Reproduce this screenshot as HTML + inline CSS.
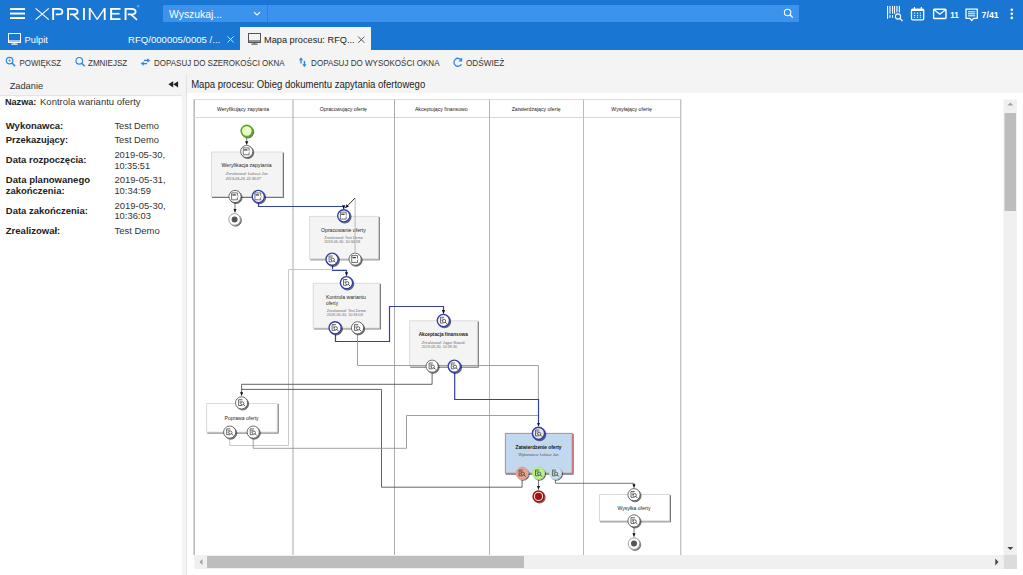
<!DOCTYPE html>
<html><head><meta charset="utf-8"><style>
*{margin:0;padding:0}
html,body{width:1023px;height:575px;overflow:hidden;background:#fff}
svg{display:block;font-family:"Liberation Sans", sans-serif}
</style></head><body>
<svg width="1023" height="575" viewBox="0 0 1023 575">
<rect x="0" y="0" width="1023" height="50" fill="#1976d2" stroke="none" stroke-width="1"/>
<rect x="163" y="5" width="104" height="17" fill="#3b93ee" stroke="none" stroke-width="1"/>
<rect x="267" y="5" width="1" height="17" fill="#2f80d8" stroke="none" stroke-width="1"/>
<rect x="268" y="5" width="531" height="17" fill="#3b93ee" stroke="none" stroke-width="1"/>
<text x="169" y="17.5" font-size="10" fill="#fff" font-weight="normal" font-style="normal" text-anchor="start" textLength="53" lengthAdjust="spacingAndGlyphs">Wyszukaj...</text>
<polyline points="254,12.2 257,15 260,12.2" fill="none" stroke="#fff" stroke-width="1.1"/>
<circle cx="787.6" cy="12.4" r="3.2" fill="none" stroke="#fff" stroke-width="1.1"/>
<polyline points="789.9,14.7 792.8,17.6" fill="none" stroke="#fff" stroke-width="1.3"/>
<rect x="10" y="8.1" width="15" height="1.9" fill="#fff" stroke="none" stroke-width="1"/>
<rect x="10" y="12.6" width="15" height="1.9" fill="#fff" stroke="none" stroke-width="1"/>
<rect x="10" y="17.1" width="15" height="1.9" fill="#fff" stroke="none" stroke-width="1"/>
<path d="M35.6,8.4 L48.8,19.6 M48.8,8.4 L35.6,19.6" stroke="#fff" stroke-width="1.15" fill="none"/>
<rect x="52.2" y="8" width="1.9" height="12" fill="#fff"/>
<path d="M53,8.95 L58.4,8.95 Q62.4,8.95 62.4,11.65 Q62.4,14.3 58.4,14.3 L55.8,14.3" stroke="#fff" stroke-width="1.8" fill="none"/>
<rect x="67.1" y="8" width="1.9" height="12" fill="#fff"/>
<path d="M68,8.95 L73.5,8.95 Q77.6,8.95 77.6,11.65 Q77.6,14.3 73.5,14.3 L70,14.3" stroke="#fff" stroke-width="1.8" fill="none"/>
<path d="M73.2,14.3 L78.8,19.9" stroke="#fff" stroke-width="1.6" fill="none"/>
<rect x="83" y="8" width="1.9" height="12" fill="#fff"/>
<rect x="88.8" y="8" width="1.8" height="12" fill="#fff"/>
<rect x="103.8" y="8" width="1.8" height="12" fill="#fff"/>
<path d="M89.8,8.4 L97.2,19.3 L104.6,8.4" stroke="#fff" stroke-width="1.35" fill="none" stroke-linejoin="bevel"/>
<rect x="110.2" y="8" width="1.9" height="12" fill="#fff"/>
<rect x="110.2" y="8" width="10.3" height="1.8" fill="#fff"/>
<rect x="110.2" y="12.9" width="9.4" height="1.6" fill="#fff"/>
<rect x="110.2" y="18.2" width="10.3" height="1.8" fill="#fff"/>
<rect x="124.6" y="8" width="1.9" height="12" fill="#fff"/>
<path d="M125.5,8.95 L131.3,8.95 Q135.6,8.95 135.6,11.65 Q135.6,14.3 131.3,14.3 L127.8,14.3" stroke="#fff" stroke-width="1.8" fill="none"/>
<path d="M131,14.3 L137,19.9" stroke="#fff" stroke-width="1.6" fill="none"/>
<circle cx="138.2" cy="6.2" r="0.9" fill="none" stroke="#cfe0f5" stroke-width="0.45"/>
<rect x="887" y="5.9" width="1.1" height="13" fill="#fff" stroke="none" stroke-width="1"/>
<rect x="889.1" y="5.9" width="1.8" height="7.8" fill="#a9cbf0" stroke="none" stroke-width="1"/>
<rect x="889.1" y="15.1" width="1.8" height="2.7" fill="#a9cbf0" stroke="none" stroke-width="1"/>
<rect x="892" y="5.9" width="1.1" height="7.8" fill="#fff" stroke="none" stroke-width="1"/>
<rect x="892" y="15.1" width="1.1" height="2.7" fill="#fff" stroke="none" stroke-width="1"/>
<rect x="894" y="5.9" width="1.1" height="7.8" fill="#fff" stroke="none" stroke-width="1"/>
<rect x="896" y="5.9" width="1.8" height="6.5" fill="#a9cbf0" stroke="none" stroke-width="1"/>
<rect x="898.8" y="5.9" width="1.1" height="6.5" fill="#fff" stroke="none" stroke-width="1"/>
<circle cx="898" cy="16.5" r="2.6" fill="#1976d2" stroke="#fff" stroke-width="1.1"/>
<polyline points="899.9,18.4 902.5,21" fill="none" stroke="#fff" stroke-width="1.3"/>
<rect x="911.5" y="9.3" width="12.2" height="10.5" fill="none" stroke="#fff" stroke-width="1.3" rx="1"/>
<rect x="911.2" y="8.7" width="12.8" height="2.2" fill="#fff" stroke="none" stroke-width="1" rx="0.8"/>
<rect x="913.9" y="7" width="1.2" height="2.5" fill="#fff" stroke="none" stroke-width="1"/>
<rect x="920.7" y="7" width="1.2" height="2.5" fill="#fff" stroke="none" stroke-width="1"/>
<rect x="913.9" y="12.6" width="1.3" height="1.2" fill="#dbe9f8" stroke="none" stroke-width="1"/>
<rect x="913.9" y="14.8" width="1.3" height="1.2" fill="#dbe9f8" stroke="none" stroke-width="1"/>
<rect x="913.9" y="16.7" width="1.3" height="1.2" fill="#dbe9f8" stroke="none" stroke-width="1"/>
<rect x="916.9" y="12.6" width="1.3" height="1.2" fill="#dbe9f8" stroke="none" stroke-width="1"/>
<rect x="916.9" y="14.8" width="1.3" height="1.2" fill="#dbe9f8" stroke="none" stroke-width="1"/>
<rect x="916.9" y="16.7" width="1.3" height="1.2" fill="#dbe9f8" stroke="none" stroke-width="1"/>
<rect x="919.8" y="12.6" width="1.3" height="1.2" fill="#dbe9f8" stroke="none" stroke-width="1"/>
<rect x="919.8" y="14.8" width="1.3" height="1.2" fill="#dbe9f8" stroke="none" stroke-width="1"/>
<rect x="919.8" y="16.7" width="1.3" height="1.2" fill="#dbe9f8" stroke="none" stroke-width="1"/>
<rect x="933.6" y="9.2" width="12.4" height="9.3" fill="none" stroke="#fff" stroke-width="1.4" rx="0.8"/>
<polyline points="933.8,9.6 939.8,14.2 945.8,9.6" fill="none" stroke="#fff" stroke-width="1.3"/>
<text x="950.2" y="18" font-size="9" fill="#fff" font-weight="bold" font-style="normal" text-anchor="start" textLength="8.6" lengthAdjust="spacingAndGlyphs">11</text>
<path d="M966,9.1 L977.3,9.1 L977.3,18.3 L973.5,18.3 L971.7,20.6 L969.9,18.3 L966,18.3 Z" fill="none" stroke="#fff" stroke-width="1.3" stroke-linejoin="round"/>
<rect x="968" y="11.3" width="7.3" height="1" fill="#fff" stroke="none" stroke-width="1"/>
<rect x="968" y="13.3" width="7.3" height="1" fill="#fff" stroke="none" stroke-width="1"/>
<rect x="968" y="15.3" width="7.3" height="1" fill="#fff" stroke="none" stroke-width="1"/>
<text x="981.6" y="18" font-size="9" fill="#fff" font-weight="bold" font-style="normal" text-anchor="start" textLength="17.2" lengthAdjust="spacingAndGlyphs">7/41</text>
<circle cx="1011.8" cy="9.7" r="1.3" fill="#fff"/>
<circle cx="1011.8" cy="13.8" r="1.3" fill="#fff"/>
<circle cx="1011.8" cy="17.9" r="1.3" fill="#fff"/>
<rect x="8.5" y="33.5" width="12" height="9" fill="none" stroke="#fff" stroke-width="1"/>
<rect x="9" y="40.2" width="11" height="1.6" fill="#fff" opacity="0.75"/>
<rect x="13.7" y="42.2" width="1.6" height="1.6" fill="#fff"/>
<rect x="11.3" y="43.6" width="6.4" height="1.1" fill="#fff"/>
<text x="24.6" y="42.7" font-size="9.8" fill="#fff" font-weight="normal" font-style="normal" text-anchor="start" textLength="23.2" lengthAdjust="spacingAndGlyphs">Pulpit</text>
<text x="128" y="42.7" font-size="9.5" fill="#fff" font-weight="normal" font-style="normal" text-anchor="start" textLength="92.3" lengthAdjust="spacingAndGlyphs">RFQ/000005/0005 /...</text>
<polyline points="227.5,36.3 233.7,42.5" fill="none" stroke="#d0e3f7" stroke-width="1"/>
<polyline points="233.7,36.3 227.5,42.5" fill="none" stroke="#d0e3f7" stroke-width="1"/>
<rect x="240" y="27" width="131" height="23" fill="#f4f4f4" stroke="none" stroke-width="1"/>
<rect x="248.5" y="33.5" width="12" height="9" fill="none" stroke="#555" stroke-width="1"/>
<rect x="249" y="40.2" width="11" height="1.6" fill="#555" opacity="0.75"/>
<rect x="253.7" y="42.2" width="1.6" height="1.6" fill="#555"/>
<rect x="251.3" y="43.6" width="6.4" height="1.1" fill="#555"/>
<text x="264" y="42.8" font-size="9.5" fill="#222" font-weight="normal" font-style="normal" text-anchor="start" textLength="90.6" lengthAdjust="spacingAndGlyphs">Mapa procesu: RFQ...</text>
<polyline points="358.2,36.6 364.4,42.8" fill="none" stroke="#555" stroke-width="1"/>
<polyline points="364.4,36.6 358.2,42.8" fill="none" stroke="#555" stroke-width="1"/>
<rect x="0" y="50" width="1023" height="25" fill="#f4f4f4" stroke="none" stroke-width="1"/>
<circle cx="9.6" cy="60.6" r="3.3" fill="none" stroke="#2e86de" stroke-width="1.15"/>
<polyline points="12.0,63.0 15.1,66.1" fill="none" stroke="#2e86de" stroke-width="1.5"/>
<polyline points="8.2,60.6 11.0,60.6" fill="none" stroke="#2e86de" stroke-width="0.6"/>
<polyline points="9.6,59.2 9.6,62.0" fill="none" stroke="#2e86de" stroke-width="0.6"/>
<text x="19.5" y="65.7" font-size="8.7" fill="#333" font-weight="normal" font-style="normal" text-anchor="start" textLength="41.6" lengthAdjust="spacingAndGlyphs">POWIĘKSZ</text>
<circle cx="79.3" cy="60.8" r="3.3" fill="none" stroke="#2e86de" stroke-width="1.15"/>
<polyline points="81.7,63.199999999999996 84.8,66.3" fill="none" stroke="#2e86de" stroke-width="1.5"/>
<text x="88" y="65.7" font-size="8.7" fill="#333" font-weight="normal" font-style="normal" text-anchor="start" textLength="39.2" lengthAdjust="spacingAndGlyphs">ZMNIEJSZ</text>
<polyline points="144,60.4 148.5,60.4" fill="none" stroke="#2e86de" stroke-width="1.4"/>
<path d="M147.3,58.3 L150.3,60.4 L147.3,62.5 Z" fill="#2e86de"/>
<polyline points="142.5,63.6 147,63.6" fill="none" stroke="#2e86de" stroke-width="1.4"/>
<path d="M143.7,61.5 L140.7,63.6 L143.7,65.7 Z" fill="#2e86de"/>
<text x="154.1" y="65.7" font-size="8.7" fill="#333" font-weight="normal" font-style="normal" text-anchor="start" textLength="130.6" lengthAdjust="spacingAndGlyphs">DOPASUJ DO SZEROKOŚCI OKNA</text>
<polyline points="301,59 301,63.5" fill="none" stroke="#2e86de" stroke-width="1.4"/>
<path d="M298.9,60.2 L301,57.2 L303.1,60.2 Z" fill="#2e86de"/>
<polyline points="304.4,60.8 304.4,65.5" fill="none" stroke="#2e86de" stroke-width="1.4"/>
<path d="M302.3,64.2 L304.4,67.2 L306.5,64.2 Z" fill="#2e86de"/>
<text x="311.1" y="65.7" font-size="8.7" fill="#333" font-weight="normal" font-style="normal" text-anchor="start" textLength="128.4" lengthAdjust="spacingAndGlyphs">DOPASUJ DO WYSOKOŚCI OKNA</text>
<path d="M461.3,60.0 A4,4 0 1 0 461.5,64.2" fill="none" stroke="#2e86de" stroke-width="1.3"/>
<path d="M462.2,57.6 L462.2,61.6 L458.4,61.6 Z" fill="#2e86de"/>
<text x="465.9" y="65.7" font-size="8.7" fill="#333" font-weight="normal" font-style="normal" text-anchor="start" textLength="38.3" lengthAdjust="spacingAndGlyphs">ODŚWIEŻ</text>
<rect x="0" y="75" width="182" height="20" fill="#f4f4f4" stroke="none" stroke-width="1"/>
<rect x="0" y="95" width="182" height="480" fill="#fff" stroke="none" stroke-width="1"/>
<rect x="182" y="75" width="5" height="500" fill="#f4f4f4" stroke="none" stroke-width="1"/>
<rect x="186" y="74" width="1" height="501" fill="#e3e3e3" stroke="none" stroke-width="1"/>
<text x="9.7" y="88.8" font-size="9.8" fill="#333" font-weight="normal" font-style="normal" text-anchor="start" textLength="33.4" lengthAdjust="spacingAndGlyphs">Zadanie</text>
<rect x="0" y="95.1" width="182" height="1" fill="#e2e2e2" stroke="none" stroke-width="1"/>
<path d="M168.4,84.3 L173.2,81.2 L173.2,87.4 Z M173.3,84.3 L178.1,81.2 L178.1,87.4 Z" fill="#222"/>
<text x="4.9" y="104.8" font-size="9.7" fill="#222" font-weight="bold" font-style="normal" text-anchor="start" textLength="31.5" lengthAdjust="spacingAndGlyphs">Nazwa:</text>
<text x="40" y="104.8" font-size="9.7" fill="#333" font-weight="normal" font-style="normal" text-anchor="start" textLength="100.6" lengthAdjust="spacingAndGlyphs">Kontrola wariantu oferty</text>
<text x="5.8" y="128.9" font-size="9.7" fill="#222" font-weight="bold" font-style="normal" text-anchor="start" textLength="57.5" lengthAdjust="spacingAndGlyphs">Wykonawca:</text>
<text x="5.8" y="143.0" font-size="9.7" fill="#222" font-weight="bold" font-style="normal" text-anchor="start" textLength="62.4" lengthAdjust="spacingAndGlyphs">Przekazujący:</text>
<text x="5.8" y="162.7" font-size="9.7" fill="#222" font-weight="bold" font-style="normal" text-anchor="start" textLength="80.7" lengthAdjust="spacingAndGlyphs">Data rozpoczęcia:</text>
<text x="5.8" y="182.8" font-size="9.7" fill="#222" font-weight="bold" font-style="normal" text-anchor="start" textLength="84.3" lengthAdjust="spacingAndGlyphs">Data planowanego</text>
<text x="5.8" y="193.8" font-size="9.7" fill="#222" font-weight="bold" font-style="normal" text-anchor="start" textLength="58.8" lengthAdjust="spacingAndGlyphs">zakończenia:</text>
<text x="5.8" y="213.6" font-size="9.7" fill="#222" font-weight="bold" font-style="normal" text-anchor="start" textLength="82.1" lengthAdjust="spacingAndGlyphs">Data zakończenia:</text>
<text x="5.8" y="233.6" font-size="9.7" fill="#222" font-weight="bold" font-style="normal" text-anchor="start" textLength="54.5" lengthAdjust="spacingAndGlyphs">Zrealizował:</text>
<text x="114.4" y="128.7" font-size="9.7" fill="#333" font-weight="normal" font-style="normal" text-anchor="start" textLength="44.6" lengthAdjust="spacingAndGlyphs">Test Demo</text>
<text x="114.4" y="142.8" font-size="9.7" fill="#333" font-weight="normal" font-style="normal" text-anchor="start" textLength="44.6" lengthAdjust="spacingAndGlyphs">Test Demo</text>
<text x="114.4" y="157.7" font-size="9.7" fill="#333" font-weight="normal" font-style="normal" text-anchor="start" textLength="50.6" lengthAdjust="spacingAndGlyphs">2019-05-30,</text>
<text x="114.4" y="168.8" font-size="9.7" fill="#333" font-weight="normal" font-style="normal" text-anchor="start" textLength="35.6" lengthAdjust="spacingAndGlyphs">10:35:51</text>
<text x="114.4" y="182.8" font-size="9.7" fill="#333" font-weight="normal" font-style="normal" text-anchor="start" textLength="51.2" lengthAdjust="spacingAndGlyphs">2019-05-31,</text>
<text x="114.4" y="193.8" font-size="9.7" fill="#333" font-weight="normal" font-style="normal" text-anchor="start" textLength="36.5" lengthAdjust="spacingAndGlyphs">10:34:59</text>
<text x="114.4" y="208.7" font-size="9.7" fill="#333" font-weight="normal" font-style="normal" text-anchor="start" textLength="51.2" lengthAdjust="spacingAndGlyphs">2019-05-30,</text>
<text x="114.4" y="219.3" font-size="9.7" fill="#333" font-weight="normal" font-style="normal" text-anchor="start" textLength="36.5" lengthAdjust="spacingAndGlyphs">10:36:03</text>
<text x="114.4" y="233.6" font-size="9.7" fill="#333" font-weight="normal" font-style="normal" text-anchor="start" textLength="45.3" lengthAdjust="spacingAndGlyphs">Test Demo</text>
<rect x="187" y="75" width="836" height="18" fill="#f4f4f4" stroke="none" stroke-width="1"/>
<rect x="187" y="93" width="836" height="482" fill="#fff" stroke="none" stroke-width="1"/>
<text x="191.2" y="87.9" font-size="10" fill="#222" font-weight="normal" font-style="normal" text-anchor="start" textLength="234" lengthAdjust="spacingAndGlyphs">Mapa procesu: Obieg dokumentu zapytania ofertowego</text>
<defs><clipPath id="dc"><rect x="187" y="93" width="816" height="462"/></clipPath><filter id="sh" x="-20%" y="-20%" width="150%" height="150%"><feGaussianBlur in="SourceAlpha" stdDeviation="0.6"/><feOffset dx="1" dy="1"/><feComponentTransfer><feFuncA type="linear" slope="0.6"/></feComponentTransfer><feMerge><feMergeNode/><feMergeNode in="SourceGraphic"/></feMerge></filter><marker id="ar" markerWidth="5" markerHeight="5" refX="3.6" refY="2.5" orient="auto" markerUnits="userSpaceOnUse"><path d="M0,0.9 L3.6,2.5 L0,4.1 Z" fill="#111"/></marker></defs>
<g clip-path="url(#dc)">
<rect x="194.2" y="99.5" width="486.3" height="460.5" fill="#fff" stroke="#dcdcdc" stroke-width="1"/>
<polyline points="194.2,99.5 194.2,560" fill="none" stroke="#b4b4b4" stroke-width="1.3"/>
<polyline points="194.2,117.5 680.5,117.5" fill="none" stroke="#d8d8d8" stroke-width="1"/>
<polyline points="293.0,99.5 293.0,560" fill="none" stroke="#aaa" stroke-width="1"/>
<polyline points="394.5,99.5 394.5,560" fill="none" stroke="#ababab" stroke-width="1"/>
<polyline points="489.5,99.5 489.5,560" fill="none" stroke="#b5b5b5" stroke-width="1"/>
<polyline points="583.5,99.5 583.5,560" fill="none" stroke="#bbb" stroke-width="1"/>
<polyline points="680.7,99.5 680.7,560" fill="none" stroke="#c4c4c4" stroke-width="1.4"/>
<text x="217.0" y="110.8" font-size="5.6" fill="#222" font-weight="normal" font-style="normal" text-anchor="start" textLength="52" lengthAdjust="spacingAndGlyphs">Weryfikujący zapytania</text>
<text x="319.65000000000003" y="110.8" font-size="5.6" fill="#222" font-weight="normal" font-style="normal" text-anchor="start" textLength="47.3" lengthAdjust="spacingAndGlyphs">Opracowujący ofertę</text>
<text x="414.90000000000003" y="110.8" font-size="5.6" fill="#222" font-weight="normal" font-style="normal" text-anchor="start" textLength="52.8" lengthAdjust="spacingAndGlyphs">Akceptujący finansowo</text>
<text x="511.70000000000005" y="110.8" font-size="5.6" fill="#222" font-weight="normal" font-style="normal" text-anchor="start" textLength="49" lengthAdjust="spacingAndGlyphs">Zatwierdzający ofertę</text>
<text x="611.35" y="110.8" font-size="5.6" fill="#222" font-weight="normal" font-style="normal" text-anchor="start" textLength="40.5" lengthAdjust="spacingAndGlyphs">Wysyłający ofertę</text>
<rect x="211.5" y="152" width="71.10000000000002" height="44.5" fill="#f4f4f4" stroke="#d4d4dc" stroke-width="0.8" filter="url(#sh)"/>
<rect x="309.7" y="216.3" width="68.60000000000002" height="42.599999999999966" fill="#f4f4f4" stroke="#d4d4dc" stroke-width="0.8" filter="url(#sh)"/>
<rect x="313.2" y="283.2" width="66.19999999999999" height="44.80000000000001" fill="#f4f4f4" stroke="#d4d4dc" stroke-width="0.8" filter="url(#sh)"/>
<rect x="409.7" y="320.8" width="67.60000000000002" height="45.39999999999998" fill="#f4f4f4" stroke="#d4d4dc" stroke-width="0.8" filter="url(#sh)"/>
<rect x="206.7" y="403.5" width="70.5" height="28.600000000000023" fill="#fff" stroke="#d0d0d0" stroke-width="0.8" filter="url(#sh)"/>
<rect x="505.3" y="433.3" width="66.90000000000003" height="39.89999999999998" fill="#c2d8ee" stroke="#e06060" stroke-width="0.8" filter="url(#sh)"/>
<rect x="599.6" y="494.6" width="69.89999999999998" height="26.299999999999955" fill="#fff" stroke="#d0d0d0" stroke-width="0.8" filter="url(#sh)"/>
<text x="246.6" y="166.8" font-size="5.6" fill="#262626" font-weight="normal" font-style="normal" text-anchor="middle" textLength="50" lengthAdjust="spacingAndGlyphs">Weryfikacja zapytania</text>
<text x="225.8" y="175.3" font-size="4.2" fill="#6a6a6a" font-weight="normal" font-style="italic" text-anchor="start" textLength="42" lengthAdjust="spacingAndGlyphs">Zrealizował: Łukasz Jan</text>
<text x="225.8" y="180.1" font-size="4.2" fill="#6a6a6a" font-weight="normal" font-style="italic" text-anchor="start" textLength="35" lengthAdjust="spacingAndGlyphs">2019-05-29, 22:35:07</text>
<text x="343.4" y="232" font-size="5.6" fill="#262626" font-weight="normal" font-style="normal" text-anchor="middle" textLength="44.8" lengthAdjust="spacingAndGlyphs">Opracowanie oferty</text>
<text x="324.2" y="239.1" font-size="4.2" fill="#6a6a6a" font-weight="normal" font-style="normal" text-anchor="start" textLength="38.7" lengthAdjust="spacingAndGlyphs">Zrealizował: Test Demo</text>
<text x="324.2" y="243.4" font-size="4.2" fill="#6a6a6a" font-weight="normal" font-style="normal" text-anchor="start" textLength="35.9" lengthAdjust="spacingAndGlyphs">2019-05-30, 10:34:59</text>
<text x="326" y="298.8" font-size="5.6" fill="#262626" font-weight="normal" font-style="normal" text-anchor="start" textLength="39.9" lengthAdjust="spacingAndGlyphs">Kontrola wariantu</text>
<text x="326" y="304.8" font-size="5.6" fill="#262626" font-weight="normal" font-style="normal" text-anchor="start" textLength="12.1" lengthAdjust="spacingAndGlyphs">oferty</text>
<text x="326.8" y="312.3" font-size="4.2" fill="#6a6a6a" font-weight="normal" font-style="normal" text-anchor="start" textLength="39.1" lengthAdjust="spacingAndGlyphs">Zrealizował: Test Demo</text>
<text x="326.8" y="316.2" font-size="4.2" fill="#6a6a6a" font-weight="normal" font-style="normal" text-anchor="start" textLength="36" lengthAdjust="spacingAndGlyphs">2019-05-30, 10:36:03</text>
<text x="443.3" y="335.9" font-size="5.6" fill="#222" font-weight="bold" font-style="normal" text-anchor="middle" textLength="49.2" lengthAdjust="spacingAndGlyphs">Akceptacja finansowa</text>
<text x="421.8" y="343.9" font-size="4.2" fill="#6a6a6a" font-weight="normal" font-style="italic" text-anchor="start" textLength="43" lengthAdjust="spacingAndGlyphs">Zrealizował: Jagar Nowak</text>
<text x="421.8" y="348" font-size="4.2" fill="#6a6a6a" font-weight="normal" font-style="normal" text-anchor="start" textLength="35.2" lengthAdjust="spacingAndGlyphs">2019-05-30, 10:39:30</text>
<text x="241.6" y="419.8" font-size="5.6" fill="#262626" font-weight="normal" font-style="normal" text-anchor="middle" textLength="34" lengthAdjust="spacingAndGlyphs">Poprawa oferty</text>
<text x="538.5" y="449.2" font-size="5.6" fill="#111" font-weight="bold" font-style="normal" text-anchor="middle" textLength="46" lengthAdjust="spacingAndGlyphs">Zatwierdzenie oferty</text>
<text x="538.5" y="456" font-size="4.4" fill="#555" font-weight="normal" font-style="normal" text-anchor="middle" textLength="40" lengthAdjust="spacingAndGlyphs">Wykonawca: Łukasz Jan</text>
<text x="634" y="509.8" font-size="5.6" fill="#262626" font-weight="normal" font-style="normal" text-anchor="middle" textLength="33" lengthAdjust="spacingAndGlyphs">Wysyłka oferty</text>
<polyline points="258.5,203 258.5,206.5 343.7,206.5 343.7,208.9" fill="none" stroke="#3440a3" stroke-width="1.2" marker-end="url(#ar)"/>
<polyline points="355.1,252 355.1,198 345,208.2" fill="none" stroke="#aaa" stroke-width="0.8"/>
<path d="M355,198 L345.3,207.9" stroke="#222" stroke-width="0.8" marker-end="url(#ar)"/>
<polyline points="332.5,266 332.5,270.5 346.5,270.5 346.5,275.8" fill="none" stroke="#3440a3" stroke-width="1.2" marker-end="url(#ar)"/>
<polyline points="229.7,438 229.7,445.5 288.5,445.5 288.5,269.5 346.5,269.5" fill="none" stroke="#c2c2c2" stroke-width="0.9"/>
<polyline points="335.5,334 335.5,341.5 389.5,341.5 389.5,306.5 443.5,306.5 443.5,313.7" fill="none" stroke="#3440a3" stroke-width="1.2" marker-end="url(#ar)"/>
<polyline points="357.5,334 357.5,365.5 538.4,365.5 538.4,399.6" fill="none" stroke="#959595" stroke-width="0.9"/>
<polyline points="432.1,373 432.1,384.3 241.6,384.3 241.6,395.8" fill="none" stroke="#555" stroke-width="0.9" marker-end="url(#ar)"/>
<polyline points="522.1,480 522.1,487.2 381.5,487.2 381.5,389.4 241.6,389.4" fill="none" stroke="#555" stroke-width="0.9"/>
<polyline points="253.2,438 253.2,448.3 406.5,448.3 406.5,415.5 538.4,415.5" fill="none" stroke="#959595" stroke-width="0.9"/>
<polyline points="454.7,373 454.7,399.5 538.5,399.5 538.5,426.2" fill="none" stroke="#3440a3" stroke-width="1.2" marker-end="url(#ar)"/>
<polyline points="555.4,480 555.4,483.3 634,483.3 634,487.8" fill="none" stroke="#555" stroke-width="0.8" marker-end="url(#ar)"/>
<polyline points="246.7,137.5 246.7,144.8" fill="none" stroke="#555" stroke-width="0.8" marker-end="url(#ar)"/>
<polyline points="235,203 235,212.4" fill="none" stroke="#555" stroke-width="0.8" marker-end="url(#ar)"/>
<polyline points="538.5,480 538.5,489.6" fill="none" stroke="#555" stroke-width="0.8" marker-end="url(#ar)"/>
<polyline points="634,527 634,536.8" fill="none" stroke="#555" stroke-width="0.8" marker-end="url(#ar)"/>
<circle cx="246.8" cy="131" r="5.6" fill="#e8fbc8" stroke="#5aa822" stroke-width="1.6" filter="url(#sh)"/>
<circle cx="234.6" cy="219.4" r="5.8" fill="#fff" stroke="#888" stroke-width="0.8" filter="url(#sh)"/>
<circle cx="234.6" cy="219.4" r="3" fill="#555"/>
<circle cx="634" cy="543.6" r="5.8" fill="#fff" stroke="#888" stroke-width="0.8" filter="url(#sh)"/>
<circle cx="634" cy="543.6" r="3" fill="#555"/>
<circle cx="538.5" cy="496.4" r="6.1" fill="#a31010" filter="url(#sh)"/><circle cx="538.5" cy="496.4" r="4.1" fill="#a81010" stroke="#f4e0e0" stroke-width="1.1"/>
<circle cx="246.7" cy="151.5" r="6.1" fill="#fff" stroke="#4a4a4a" stroke-width="0.8" filter="url(#sh)"/>
<g fill="none" stroke="#3a3a3a" stroke-width="0.7"><path d="M249.1,150.7 L249.1,147.9 L243.29999999999998,147.9 L243.29999999999998,154.8 L249.1,154.8 L249.1,152.5"/></g><rect x="244.1" y="149.4" width="3.4" height="1.1" fill="#222"/><path d="M249.1,150.7 L249.89999999999998,151.6 L249.1,152.5" fill="none" stroke="#666" stroke-width="0.5"/>
<circle cx="235" cy="196.5" r="6.1" fill="#fff" stroke="#4a4a4a" stroke-width="0.8" filter="url(#sh)"/>
<g fill="none" stroke="#3a3a3a" stroke-width="0.7"><path d="M237.4,195.7 L237.4,192.9 L231.6,192.9 L231.6,199.8 L237.4,199.8 L237.4,197.5"/></g><rect x="232.4" y="194.4" width="3.4" height="1.1" fill="#222"/><path d="M237.4,195.7 L238.2,196.6 L237.4,197.5" fill="none" stroke="#666" stroke-width="0.5"/>
<circle cx="258.3" cy="196.5" r="6.1" fill="#fff" stroke="#3440a3" stroke-width="1.4" filter="url(#sh)"/>
<g fill="none" stroke="#3a3a3a" stroke-width="0.7"><path d="M260.7,195.7 L260.7,192.9 L254.9,192.9 L254.9,199.8 L260.7,199.8 L260.7,197.5"/></g><rect x="255.70000000000002" y="194.4" width="3.4" height="1.1" fill="#222"/><path d="M260.7,195.7 L261.5,196.6 L260.7,197.5" fill="none" stroke="#666" stroke-width="0.5"/>
<circle cx="343.8" cy="215.8" r="6.1" fill="#fff" stroke="#3440a3" stroke-width="1.4" filter="url(#sh)"/>
<g fill="none" stroke="#3a3a3a" stroke-width="0.7"><path d="M346.2,215.0 L346.2,212.20000000000002 L340.40000000000003,212.20000000000002 L340.40000000000003,219.10000000000002 L346.2,219.10000000000002 L346.2,216.8"/></g><rect x="341.2" y="213.70000000000002" width="3.4" height="1.1" fill="#222"/><path d="M346.2,215.0 L347.0,215.9 L346.2,216.8" fill="none" stroke="#666" stroke-width="0.5"/>
<circle cx="332.1" cy="259.2" r="6.1" fill="#fff" stroke="#3440a3" stroke-width="1.4" filter="url(#sh)"/>
<g fill="none" stroke="#3a3a3a" stroke-width="0.75"><path d="M332.90000000000003,256.0 L329.1,256.0 L329.1,261.8 L332.3,261.8"/><path d="M330.1,257.59999999999997 h2 M330.1,259.09999999999997 h1.2" stroke-width="0.6"/><circle cx="332.8" cy="259.7" r="1.6"/><path d="M333.90000000000003,260.8 L335.5,262.5" stroke-width="0.9"/></g>
<circle cx="355.1" cy="259.2" r="6.1" fill="#fff" stroke="#4a4a4a" stroke-width="0.8" filter="url(#sh)"/>
<g fill="none" stroke="#3a3a3a" stroke-width="0.7"><path d="M357.5,258.4 L357.5,255.6 L351.70000000000005,255.6 L351.70000000000005,262.5 L357.5,262.5 L357.5,260.2"/></g><rect x="352.5" y="257.09999999999997" width="3.4" height="1.1" fill="#222"/><path d="M357.5,258.4 L358.3,259.3 L357.5,260.2" fill="none" stroke="#666" stroke-width="0.5"/>
<circle cx="346.5" cy="282.7" r="6.1" fill="#fff" stroke="#3440a3" stroke-width="1.4" filter="url(#sh)"/>
<g fill="none" stroke="#3a3a3a" stroke-width="0.75"><path d="M347.3,279.5 L343.5,279.5 L343.5,285.3 L346.7,285.3"/><path d="M344.5,281.09999999999997 h2 M344.5,282.59999999999997 h1.2" stroke-width="0.6"/><circle cx="347.2" cy="283.2" r="1.6"/><path d="M348.3,284.3 L349.9,286.0" stroke-width="0.9"/></g>
<circle cx="335.1" cy="327.8" r="6.1" fill="#fff" stroke="#3440a3" stroke-width="1.4" filter="url(#sh)"/>
<g fill="none" stroke="#3a3a3a" stroke-width="0.75"><path d="M335.90000000000003,324.6 L332.1,324.6 L332.1,330.40000000000003 L335.3,330.40000000000003"/><path d="M333.1,326.2 h2 M333.1,327.7 h1.2" stroke-width="0.6"/><circle cx="335.8" cy="328.3" r="1.6"/><path d="M336.90000000000003,329.40000000000003 L338.5,331.1" stroke-width="0.9"/></g>
<circle cx="357.5" cy="327.8" r="6.1" fill="#fff" stroke="#4a4a4a" stroke-width="0.8" filter="url(#sh)"/>
<g fill="none" stroke="#3a3a3a" stroke-width="0.75"><path d="M358.3,324.6 L354.5,324.6 L354.5,330.40000000000003 L357.7,330.40000000000003"/><path d="M355.5,326.2 h2 M355.5,327.7 h1.2" stroke-width="0.6"/><circle cx="358.2" cy="328.3" r="1.6"/><path d="M359.3,329.40000000000003 L360.9,331.1" stroke-width="0.9"/></g>
<circle cx="443.4" cy="320.5" r="6.1" fill="#fff" stroke="#3440a3" stroke-width="1.4" filter="url(#sh)"/>
<g fill="none" stroke="#3a3a3a" stroke-width="0.75"><path d="M444.2,317.3 L440.4,317.3 L440.4,323.1 L443.59999999999997,323.1"/><path d="M441.4,318.9 h2 M441.4,320.4 h1.2" stroke-width="0.6"/><circle cx="444.09999999999997" cy="321.0" r="1.6"/><path d="M445.2,322.1 L446.79999999999995,323.8" stroke-width="0.9"/></g>
<circle cx="432.1" cy="366.2" r="6.1" fill="#fff" stroke="#4a4a4a" stroke-width="0.8" filter="url(#sh)"/>
<g fill="none" stroke="#3a3a3a" stroke-width="0.75"><path d="M432.90000000000003,363.0 L429.1,363.0 L429.1,368.8 L432.3,368.8"/><path d="M430.1,364.59999999999997 h2 M430.1,366.09999999999997 h1.2" stroke-width="0.6"/><circle cx="432.8" cy="366.7" r="1.6"/><path d="M433.90000000000003,367.8 L435.5,369.5" stroke-width="0.9"/></g>
<circle cx="454.3" cy="366.2" r="6.1" fill="#fff" stroke="#3440a3" stroke-width="1.4" filter="url(#sh)"/>
<g fill="none" stroke="#3a3a3a" stroke-width="0.75"><path d="M455.1,363.0 L451.3,363.0 L451.3,368.8 L454.5,368.8"/><path d="M452.3,364.59999999999997 h2 M452.3,366.09999999999997 h1.2" stroke-width="0.6"/><circle cx="455.0" cy="366.7" r="1.6"/><path d="M456.1,367.8 L457.7,369.5" stroke-width="0.9"/></g>
<circle cx="241.6" cy="402.9" r="6.1" fill="#fff" stroke="#4a4a4a" stroke-width="0.8" filter="url(#sh)"/>
<g fill="none" stroke="#3a3a3a" stroke-width="0.75"><path d="M242.4,399.7 L238.6,399.7 L238.6,405.5 L241.79999999999998,405.5"/><path d="M239.6,401.29999999999995 h2 M239.6,402.79999999999995 h1.2" stroke-width="0.6"/><circle cx="242.29999999999998" cy="403.4" r="1.6"/><path d="M243.4,404.5 L245.0,406.2" stroke-width="0.9"/></g>
<circle cx="229.7" cy="432.1" r="6.1" fill="#fff" stroke="#4a4a4a" stroke-width="0.8" filter="url(#sh)"/>
<g fill="none" stroke="#3a3a3a" stroke-width="0.75"><path d="M230.5,428.90000000000003 L226.7,428.90000000000003 L226.7,434.70000000000005 L229.89999999999998,434.70000000000005"/><path d="M227.7,430.5 h2 M227.7,432.0 h1.2" stroke-width="0.6"/><circle cx="230.39999999999998" cy="432.6" r="1.6"/><path d="M231.5,433.70000000000005 L233.1,435.40000000000003" stroke-width="0.9"/></g>
<circle cx="253.2" cy="432.1" r="6.1" fill="#fff" stroke="#4a4a4a" stroke-width="0.8" filter="url(#sh)"/>
<g fill="none" stroke="#3a3a3a" stroke-width="0.75"><path d="M254.0,428.90000000000003 L250.2,428.90000000000003 L250.2,434.70000000000005 L253.39999999999998,434.70000000000005"/><path d="M251.2,430.5 h2 M251.2,432.0 h1.2" stroke-width="0.6"/><circle cx="253.89999999999998" cy="432.6" r="1.6"/><path d="M255.0,433.70000000000005 L256.59999999999997,435.40000000000003" stroke-width="0.9"/></g>
<circle cx="634" cy="494.7" r="6.1" fill="#fff" stroke="#4a4a4a" stroke-width="0.8" filter="url(#sh)"/>
<g fill="none" stroke="#3a3a3a" stroke-width="0.75"><path d="M634.8,491.5 L631,491.5 L631,497.3 L634.2,497.3"/><path d="M632,493.09999999999997 h2 M632,494.59999999999997 h1.2" stroke-width="0.6"/><circle cx="634.7" cy="495.2" r="1.6"/><path d="M635.8,496.3 L637.4,498.0" stroke-width="0.9"/></g>
<circle cx="634" cy="520.9" r="6.1" fill="#fff" stroke="#4a4a4a" stroke-width="0.8" filter="url(#sh)"/>
<g fill="none" stroke="#3a3a3a" stroke-width="0.75"><path d="M634.8,517.6999999999999 L631,517.6999999999999 L631,523.5 L634.2,523.5"/><path d="M632,519.3 h2 M632,520.8 h1.2" stroke-width="0.6"/><circle cx="634.7" cy="521.4" r="1.6"/><path d="M635.8,522.5 L637.4,524.1999999999999" stroke-width="0.9"/></g>
<circle cx="538.5" cy="433.3" r="6.1" fill="#e8e8e8" stroke="#3440a3" stroke-width="1.5" filter="url(#sh)"/>
<g fill="none" stroke="#3a3a3a" stroke-width="0.75"><path d="M539.3,430.1 L535.5,430.1 L535.5,435.90000000000003 L538.7,435.90000000000003"/><path d="M536.5,431.7 h2 M536.5,433.2 h1.2" stroke-width="0.6"/><circle cx="539.2" cy="433.8" r="1.6"/><path d="M540.3,434.90000000000003 L541.9,436.6" stroke-width="0.9"/></g>
<circle cx="522.1" cy="473.2" r="6.1" fill="#e8a28e" stroke="#e0a090" stroke-width="0.8" filter="url(#sh)"/>
<g fill="none" stroke="#3a3a3a" stroke-width="0.75"><path d="M522.9,470.0 L519.1,470.0 L519.1,475.8 L522.3000000000001,475.8"/><path d="M520.1,471.59999999999997 h2 M520.1,473.09999999999997 h1.2" stroke-width="0.6"/><circle cx="522.8000000000001" cy="473.7" r="1.6"/><path d="M523.9,474.8 L525.5,476.5" stroke-width="0.9"/></g>
<circle cx="538.5" cy="473.2" r="6.1" fill="#b8f28c" stroke="#a8e080" stroke-width="0.8" filter="url(#sh)"/>
<g fill="none" stroke="#3a3a3a" stroke-width="0.75"><path d="M539.3,470.0 L535.5,470.0 L535.5,475.8 L538.7,475.8"/><path d="M536.5,471.59999999999997 h2 M536.5,473.09999999999997 h1.2" stroke-width="0.6"/><circle cx="539.2" cy="473.7" r="1.6"/><path d="M540.3,474.8 L541.9,476.5" stroke-width="0.9"/></g>
<circle cx="555.4" cy="473.2" r="6.1" fill="#cde3ee" stroke="#b8d4e0" stroke-width="0.8" filter="url(#sh)"/>
<g fill="none" stroke="#3a3a3a" stroke-width="0.75"><path d="M556.1999999999999,470.0 L552.4,470.0 L552.4,475.8 L555.6,475.8"/><path d="M553.4,471.59999999999997 h2 M553.4,473.09999999999997 h1.2" stroke-width="0.6"/><circle cx="556.1" cy="473.7" r="1.6"/><path d="M557.1999999999999,474.8 L558.8,476.5" stroke-width="0.9"/></g>
</g>
<rect x="1003.5" y="99.5" width="13.5" height="455.5" fill="#f0f0f0" stroke="none" stroke-width="1"/>
<rect x="1004.5" y="113" width="11.5" height="98" fill="#bdbdbd" stroke="none" stroke-width="1"/>
<path d="M1007.3,105.6 L1010.3,102.6 L1013.3,105.6 Z" fill="#a0a0a0"/>
<path d="M1007.3,547 L1010.3,550 L1013.3,547 Z" fill="#444"/>
<rect x="194.5" y="555" width="808.5" height="14" fill="#f0f0f0" stroke="none" stroke-width="1"/>
<rect x="207" y="556" width="317" height="12" fill="#bdbdbd" stroke="none" stroke-width="1"/>
<path d="M202.5,559 L199.5,562 L202.5,565 Z" fill="#a0a0a0"/>
<path d="M995.3,558.5 L998.5,562 L995.3,565.5 Z" fill="#444"/>
<rect x="1003.5" y="555" width="13.5" height="14" fill="#dcdcdc" stroke="none" stroke-width="1"/>
</svg></body></html>
